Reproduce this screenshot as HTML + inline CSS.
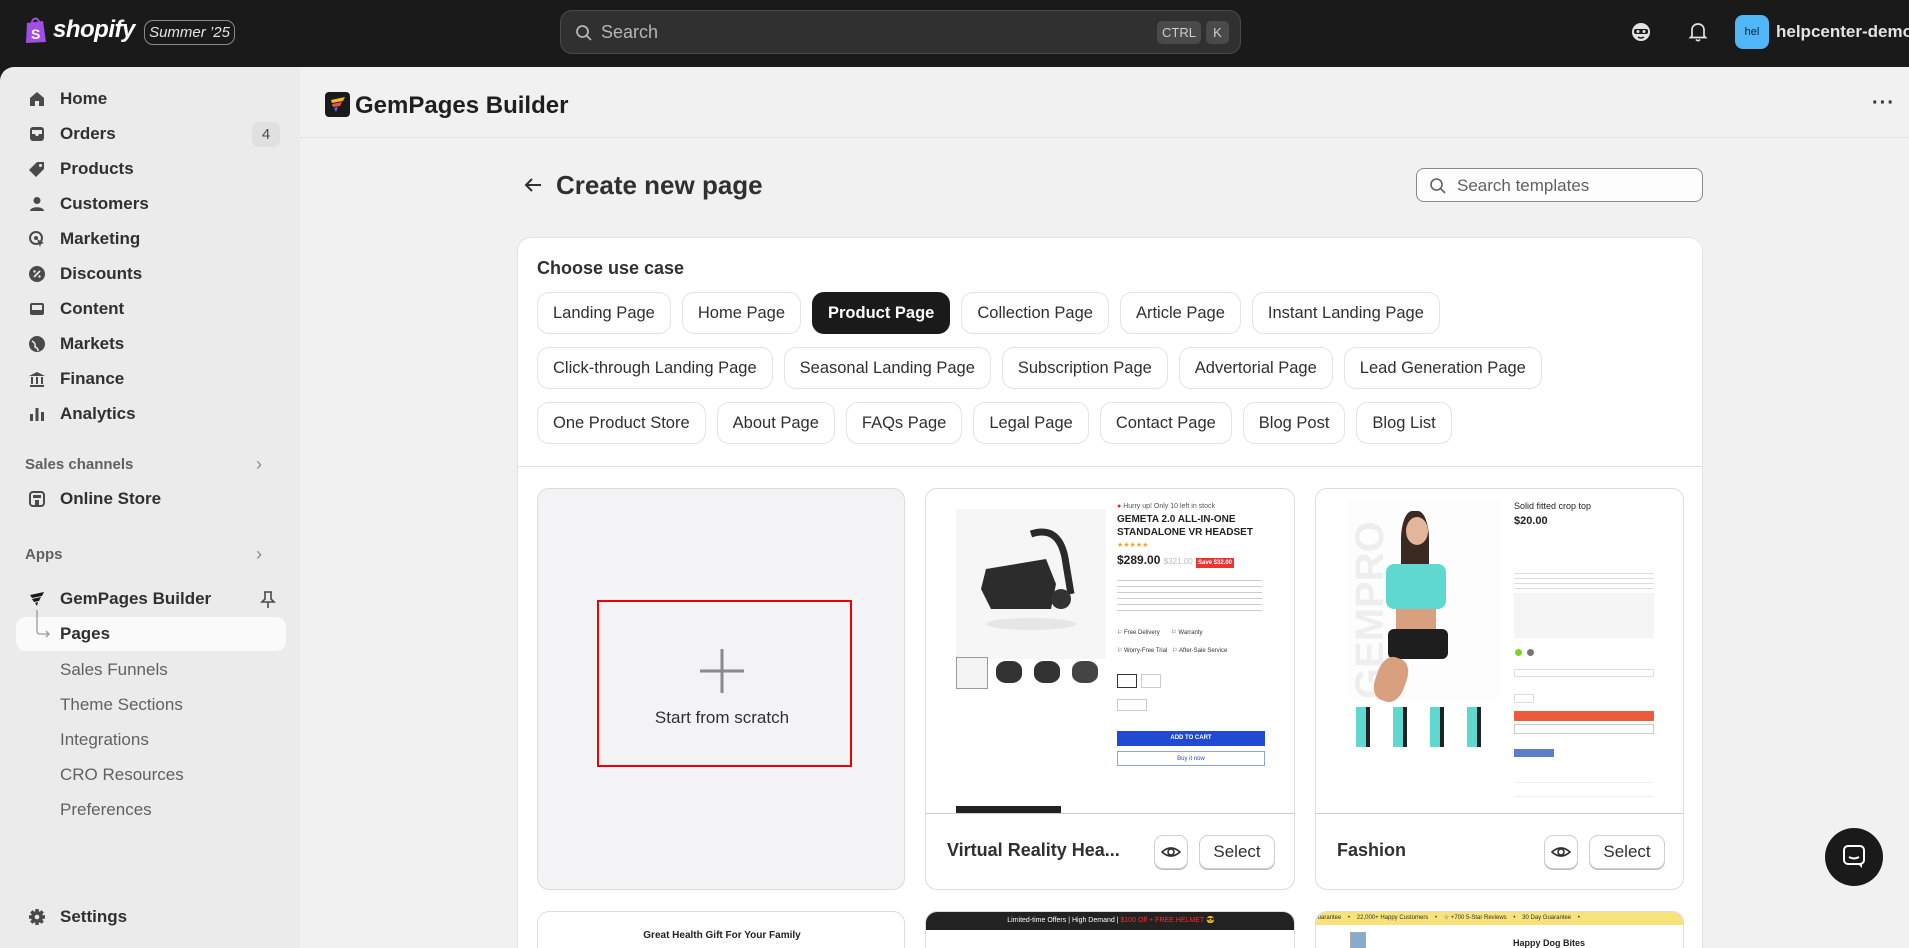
<!DOCTYPE html>
<html style="overflow:hidden;width:1909px;height:948px"><head><meta charset="utf-8">
<style>
*{box-sizing:border-box;margin:0;padding:0}
body{width:1909px;height:948px;overflow:hidden;background:#1a1a1a;font-family:"Liberation Sans",Arial,sans-serif;color:#303030;position:relative}
.a{position:absolute}
.top{left:0;top:0;width:1909px;height:67px;background:#1a1a1a}
.side{left:0;top:67px;width:300px;height:881px;background:#ebebeb;border-top-left-radius:14px;overflow:hidden}
.main{left:300px;top:67px;width:1609px;height:881px;background:#f1f1f1;overflow:hidden}
.nav{position:absolute;left:60px;font-size:17px;font-weight:bold;color:#303030;line-height:20px;white-space:nowrap}
.ico{position:absolute;left:28px;width:18px;height:18px}
.sub{position:absolute;left:60px;font-size:17px;color:#616161;line-height:20px}
.chip{display:inline-block;height:42px;line-height:40px;padding:0 15px;border:1px solid #e3e3e3;border-radius:12px;font-size:16.5px;color:#303030;background:#fff;margin-right:11px;white-space:nowrap}
.row{position:absolute;left:537px;display:flex}
.card{position:absolute;background:#fff;border:1px solid #dcdcdc;border-radius:12px;overflow:hidden}
.btn{position:absolute;height:34px;border:1px solid #cfcfcf;border-radius:9px;background:#fff;box-shadow:0 1px 0 #bbb;font-size:17px;line-height:32px;text-align:center}
</style></head><body>
<div class="a top">
  <svg class="a" style="left:24px;top:16px" width="24" height="28" viewBox="0 0 24 28"><path d="M3 7 L19 5 L22 26 L2 27 Z" fill="#a04ee6"/><path d="M8 7 C8 1 15 1 15 7" stroke="#a04ee6" stroke-width="2" fill="none"/><text x="7" y="23" font-size="14" font-weight="bold" fill="#fff" font-family="Liberation Sans">S</text></svg>
  <div class="a" style="left:53px;top:16px;font-size:24px;font-weight:bold;font-style:italic;color:#fff;letter-spacing:-0.5px">shopify</div>
  <div class="a" style="left:144px;top:20px;width:91px;height:25px;border:1px solid #8a8a8a;border-radius:9px;color:#e3e3e3;font-size:15px;font-style:italic;text-align:center;line-height:23px">Summer ’25</div>
  <div class="a" style="left:560px;top:10px;width:681px;height:44px;background:#303030;border:1px solid #4a4a4a;border-radius:12px">
    <svg class="a" style="left:14px;top:13px" width="18" height="18" viewBox="0 0 18 18"><circle cx="7.5" cy="7.5" r="5.5" stroke="#b5b5b5" stroke-width="1.8" fill="none"/><path d="M11.5 11.5 L16 16" stroke="#b5b5b5" stroke-width="1.8"/></svg>
    <div class="a" style="left:40px;top:11px;font-size:18px;color:#b5b5b5">Search</div>
    <div class="a" style="left:596px;top:10px;width:44px;height:23px;background:#4a4a4a;border-radius:5px;color:#cfcfcf;font-size:13px;text-align:center;line-height:23px">CTRL</div>
    <div class="a" style="left:645px;top:10px;width:23px;height:23px;background:#4a4a4a;border-radius:5px;color:#cfcfcf;font-size:13px;text-align:center;line-height:23px">K</div>
  </div>
  <svg class="a" style="left:1630px;top:21px" width="22" height="22" viewBox="0 0 22 22"><circle cx="11" cy="11" r="9" fill="#e3e3e3"/><rect x="4" y="8" width="14" height="5" rx="2" fill="#1a1a1a"/><circle cx="8" cy="10.5" r="1.5" fill="#e3e3e3"/><circle cx="14" cy="10.5" r="1.5" fill="#e3e3e3"/><path d="M8 16 Q11 18 14 16" stroke="#1a1a1a" stroke-width="1.5" fill="none"/></svg>
  <svg class="a" style="left:1687px;top:21px" width="22" height="22" viewBox="0 0 22 22"><path d="M5 15 L5 9 C5 5 8 3 11 3 C14 3 17 5 17 9 L17 15 L18.5 16.5 L3.5 16.5 Z" stroke="#e3e3e3" stroke-width="1.7" fill="none"/><path d="M9 18.5 Q11 21 13 18.5" stroke="#e3e3e3" stroke-width="1.7" fill="none"/></svg>
  <div class="a" style="left:1735px;top:15px;width:34px;height:34px;background:#4fb7f5;border-radius:8px;font-size:11px;color:#123;text-align:center;line-height:34px">hel</div>
  <div class="a" style="left:1776px;top:22px;font-size:17px;font-weight:bold;color:#e3e3e3;white-space:nowrap">helpcenter-demo</div>
</div>

<div class="a side">
  <div style="position:relative;top:-67px">
  <svg class="ico" style="top:90px" viewBox="0 0 18 18"><path d="M2 8 L9 2 L16 8 L16 16 L11 16 L11 11 L7 11 L7 16 L2 16 Z" fill="#4a4a4a"/></svg><div class="nav" style="top:89px">Home</div>
  <svg class="ico" style="top:125px" viewBox="0 0 18 18"><rect x="2" y="2" width="14" height="14" rx="3" fill="#4a4a4a"/><path d="M4 5 L14 5 L14 9 L11 9 L10 11 L8 11 L7 9 L4 9Z" fill="#ebebeb"/></svg><div class="nav" style="top:124px">Orders</div>
  <div class="a" style="left:252px;top:122px;width:28px;height:25px;background:#e0e0e0;border-radius:7px;font-size:15px;color:#4a4a4a;text-align:center;line-height:25px">4</div>
  <svg class="ico" style="top:160px" viewBox="0 0 18 18"><path d="M9 2 L16 2 L16 9 L8 17 L1 10 Z" fill="#4a4a4a"/><circle cx="12.5" cy="5.5" r="1.5" fill="#ebebeb"/></svg><div class="nav" style="top:159px">Products</div>
  <svg class="ico" style="top:195px" viewBox="0 0 18 18"><circle cx="9" cy="5.5" r="3.5" fill="#4a4a4a"/><path d="M2 16 C2 11 16 11 16 16 Z" fill="#4a4a4a"/></svg><div class="nav" style="top:194px">Customers</div>
  <svg class="ico" style="top:230px" viewBox="0 0 18 18"><circle cx="8" cy="8" r="6" stroke="#4a4a4a" stroke-width="2" fill="none"/><circle cx="8" cy="8" r="2" fill="#4a4a4a"/><path d="M9 9 L16 13 L13 14 L12 17Z" fill="#4a4a4a"/></svg><div class="nav" style="top:229px">Marketing</div>
  <svg class="ico" style="top:265px" viewBox="0 0 18 18"><circle cx="9" cy="9" r="8" fill="#4a4a4a"/><path d="M6 12 L12 6" stroke="#ebebeb" stroke-width="1.8"/><circle cx="6.5" cy="6.5" r="1.2" fill="#ebebeb"/><circle cx="11.5" cy="11.5" r="1.2" fill="#ebebeb"/></svg><div class="nav" style="top:264px">Discounts</div>
  <svg class="ico" style="top:300px" viewBox="0 0 18 18"><rect x="2" y="3" width="14" height="12" rx="2" fill="#4a4a4a"/><rect x="4" y="5" width="10" height="5" fill="#ebebeb"/></svg><div class="nav" style="top:299px">Content</div>
  <svg class="ico" style="top:335px" viewBox="0 0 18 18"><circle cx="9" cy="9" r="8" fill="#4a4a4a"/><path d="M4 6 Q8 8 7 12 Q10 13 10 16" stroke="#ebebeb" stroke-width="1.5" fill="none"/></svg><div class="nav" style="top:334px">Markets</div>
  <svg class="ico" style="top:370px" viewBox="0 0 18 18"><path d="M1 6 L9 2 L17 6Z M2 15 L16 15 L16 17 L2 17Z" fill="#4a4a4a"/><rect x="3" y="7" width="2" height="7" fill="#4a4a4a"/><rect x="8" y="7" width="2" height="7" fill="#4a4a4a"/><rect x="13" y="7" width="2" height="7" fill="#4a4a4a"/></svg><div class="nav" style="top:369px">Finance</div>
  <svg class="ico" style="top:405px" viewBox="0 0 18 18"><rect x="2" y="9" width="3" height="7" fill="#4a4a4a"/><rect x="7.5" y="3" width="3" height="13" fill="#4a4a4a"/><rect x="13" y="7" width="3" height="9" fill="#4a4a4a"/></svg><div class="nav" style="top:404px">Analytics</div>
  <div class="a" style="left:25px;top:456px;font-size:15px;font-weight:bold;color:#616161">Sales channels</div>
  <div class="a" style="left:256px;top:454px;font-size:18px;color:#8a8a8a">›</div>
  <svg class="ico" style="top:490px" viewBox="0 0 18 18"><rect x="2" y="2" width="14" height="14" rx="3" stroke="#4a4a4a" stroke-width="2" fill="none"/><rect x="5" y="5" width="8" height="3" fill="#4a4a4a"/><rect x="7" y="10" width="4" height="5" fill="#4a4a4a"/></svg><div class="nav" style="top:489px">Online Store</div>
  <div class="a" style="left:25px;top:546px;font-size:15px;font-weight:bold;color:#616161">Apps</div>
  <div class="a" style="left:256px;top:544px;font-size:18px;color:#8a8a8a">›</div>
  <svg class="ico" style="top:590px" viewBox="0 0 18 18"><path d="M2 5 L16 2 L14 6 L4 8Z M4 9 L13 7 L11 11 L6 12Z M7 13 L10 12 L9 16Z" fill="#1a1a1a"/></svg><div class="nav" style="top:589px">GemPages Builder</div>
  <svg class="a" style="left:260px;top:590px" width="16" height="20" viewBox="0 0 16 20"><path d="M4 2 L12 2 M5 2 L5 9 L2 12 L14 12 L11 9 L11 2 M8 12 L8 18" stroke="#4a4a4a" stroke-width="1.6" fill="none"/></svg>
  <div class="a" style="left:16px;top:617px;width:270px;height:34px;background:#fafafa;border-radius:10px"></div>
  <svg class="a" style="left:34px;top:610px" width="20" height="30" viewBox="0 0 20 30"><path d="M3 0 L3 21 Q3 24 6 24 L15 24 M12 21 L15 24 L12 27" stroke="#9a9a9a" stroke-width="1.3" fill="none"/></svg>
  <div class="nav" style="top:624px">Pages</div>
  <div class="sub" style="top:660px">Sales Funnels</div>
  <div class="sub" style="top:695px">Theme Sections</div>
  <div class="sub" style="top:730px">Integrations</div>
  <div class="sub" style="top:765px">CRO Resources</div>
  <div class="sub" style="top:800px">Preferences</div>
  <svg class="ico" style="top:908px" viewBox="0 0 18 18"><circle cx="9" cy="9" r="6" fill="#4a4a4a"/><g stroke="#4a4a4a" stroke-width="3.4"><path d="M9 1 L9 17 M1 9 L17 9 M3.3 3.3 L14.7 14.7 M14.7 3.3 L3.3 14.7"/></g><circle cx="9" cy="9" r="2.3" fill="#ebebeb"/></svg><div class="nav" style="top:907px">Settings</div>
  </div>
</div>

<div class="a main">
  <div style="position:relative;left:-300px;top:-67px">
  <div class="a" style="left:300px;top:137px;width:1609px;height:1px;background:#e1e1e1"></div>
  <svg class="a" style="left:325px;top:92px" width="25" height="25" viewBox="0 0 25 25"><rect width="25" height="25" rx="4" fill="#1a1a1a"/><path d="M6 8 L20 5 L18 9 L7 11Z" fill="#f6b72b"/><path d="M7 12 L17 10 L15 14 L8 15Z" fill="#ef4e5e"/><path d="M9 16 L13 15 L11 20Z" fill="#5c6fe8"/></svg>
  <div class="a" style="left:355px;top:92px;font-size:24px;font-weight:bold;color:#1f1f1f">GemPages Builder</div>
  <div class="a" style="left:1872px;top:92px;font-size:20px;font-weight:bold;color:#303030;letter-spacing:1px">···</div>
  <svg class="a" style="left:523px;top:176px" width="20" height="18" viewBox="0 0 20 18"><path d="M18 9 L3 9 M9 3 L3 9 L9 15" stroke="#303030" stroke-width="2" fill="none"/></svg>
  <div class="a" style="left:556px;top:170px;font-size:26px;font-weight:bold;color:#303030">Create new page</div>
  <div class="a" style="left:1416px;top:168px;width:287px;height:34px;background:#fdfdfd;border:1px solid #8a8a8a;border-radius:8px">
    <svg class="a" style="left:12px;top:8px" width="18" height="18" viewBox="0 0 18 18"><circle cx="7.5" cy="7.5" r="5.5" stroke="#616161" stroke-width="1.6" fill="none"/><path d="M11.5 11.5 L16 16" stroke="#616161" stroke-width="1.6"/></svg>
    <div class="a" style="left:40px;top:7px;font-size:17px;color:#616161">Search templates</div>
  </div>
  <div class="a" style="left:517px;top:237px;width:1186px;height:730px;background:#fff;border:1px solid #e3e3e3;border-radius:14px"></div>
  <div class="a" style="left:537px;top:258px;font-size:18px;font-weight:bold;color:#303030">Choose use case</div>
  <div class="row" style="top:292px"><span class="chip">Landing Page</span><span class="chip">Home Page</span><span class="chip" style="background:#1a1a1a;color:#fff;font-weight:bold;border-color:#1a1a1a">Product Page</span><span class="chip">Collection Page</span><span class="chip">Article Page</span><span class="chip">Instant Landing Page</span></div>
  <div class="row" style="top:347px"><span class="chip">Click-through Landing Page</span><span class="chip">Seasonal Landing Page</span><span class="chip">Subscription Page</span><span class="chip">Advertorial Page</span><span class="chip">Lead Generation Page</span></div>
  <div class="row" style="top:402px"><span class="chip">One Product Store</span><span class="chip">About Page</span><span class="chip">FAQs Page</span><span class="chip">Legal Page</span><span class="chip">Contact Page</span><span class="chip">Blog Post</span><span class="chip">Blog List</span></div>
  <div class="a" style="left:518px;top:466px;width:1184px;height:1px;background:#e3e3e3"></div>

  <div class="card" style="left:537px;top:488px;width:368px;height:402px;background:#f3f3f5">
    <div class="a" style="left:59px;top:111px;width:255px;height:167px;border:2px solid #e00;"></div>
    <svg class="a" style="left:160px;top:158px" width="48" height="48" viewBox="0 0 48 48"><path d="M24 2 L24 46 M2 24 L46 24" stroke="#8a8a8a" stroke-width="3"/></svg>
    <div class="a" style="left:0;top:219px;width:368px;text-align:center;font-size:17px;color:#303030">Start from scratch</div>
  </div>

  <div class="card" style="left:925px;top:488px;width:370px;height:402px">
    <div class="a" style="left:30px;top:20px;width:150px;height:150px;background:#f6f6f6"></div>
    <svg class="a" style="left:45px;top:35px" width="120" height="110" viewBox="0 0 120 110"><path d="M60 10 Q90 0 95 40 L100 70" stroke="#2a2a2a" stroke-width="7" fill="none"/><path d="M15 45 L75 35 L85 60 L80 85 L20 85 L10 65Z" fill="#2c2c2c"/><circle cx="90" cy="75" r="10" fill="#333"/><ellipse cx="60" cy="100" rx="45" ry="6" fill="#e6e6e6"/></svg>
    <div class="a" style="left:30px;top:168px;width:32px;height:32px;border:1px solid #999;background:#f3f3f3"></div>
    <div class="a" style="left:70px;top:172px;width:26px;height:22px;background:#333;border-radius:40%"></div>
    <div class="a" style="left:108px;top:172px;width:26px;height:22px;background:#333;border-radius:40%"></div>
    <div class="a" style="left:146px;top:172px;width:26px;height:22px;background:#444;border-radius:40%"></div>
    <div class="a" style="left:191px;top:14px;font-size:7px;color:#e22">● <span style="color:#555">Hurry up! Only 10 left in stock</span></div>
    <div class="a" style="left:191px;top:24px;font-size:10px;font-weight:bold;color:#222;line-height:13px">GEMETA 2.0 ALL-IN-ONE<br>STANDALONE VR HEADSET</div>
    <div class="a" style="left:191px;top:52px;font-size:7px;color:#f5a623">★★★★★</div>
    <div class="a" style="left:191px;top:64px;font-size:12px;font-weight:bold;color:#222">$289.00 <span style="font-size:8px;color:#bbb;font-weight:normal">$321.00</span> <span style="font-size:6px;background:#e33;color:#fff;padding:2px">Save $32.00</span></div>
    <div class="a" style="left:191px;top:88px;width:145px;height:36px;background:repeating-linear-gradient(#fff 0 3px,#ccc 3px 4px,#fff 4px 6px)"></div>
    <div class="a" style="left:191px;top:135px;width:145px;height:40px;font-size:6px;color:#333;line-height:18px">⚐ Free Delivery &nbsp;&nbsp;&nbsp;&nbsp;&nbsp; ⚐ Warranty<br>⚐ Worry-Free Trial &nbsp; ⚐ After-Sale Service</div>
    <div class="a" style="left:191px;top:185px;width:20px;height:14px;border:1px solid #333"></div>
    <div class="a" style="left:215px;top:185px;width:20px;height:14px;border:1px solid #ccc"></div>
    <div class="a" style="left:191px;top:210px;width:30px;height:12px;border:1px solid #ccc"></div>
    <div class="a" style="left:191px;top:242px;width:148px;height:15px;background:#2249d3;color:#fff;font-size:6px;font-weight:bold;text-align:center;line-height:15px">ADD TO CART</div>
    <div class="a" style="left:191px;top:262px;width:148px;height:15px;border:1px solid #8ea0e8;color:#2249d3;font-size:6px;text-align:center;line-height:14px">Buy it now</div>
    <div class="a" style="left:30px;top:317px;width:105px;height:7px;background:#222"></div>
    <div class="a" style="left:0;top:324px;width:370px;height:1px;background:#ccc"></div>
    <div class="a" style="left:21px;top:351px;font-size:18px;font-weight:bold;color:#303030">Virtual Reality Hea...</div>
  </div>
  <div class="btn" style="left:1154px;top:835px;width:34px"><svg width="20" height="20" viewBox="0 0 20 20" style="margin-top:6px"><path d="M1 10 Q10 2 19 10 Q10 18 1 10Z" stroke="#303030" stroke-width="1.6" fill="none"/><circle cx="10" cy="10" r="3" stroke="#303030" stroke-width="1.6" fill="none"/></svg></div>
  <div class="btn" style="left:1199px;top:835px;width:76px">Select</div>

  <div class="card" style="left:1315px;top:488px;width:369px;height:402px">
    <div class="a" style="left:30px;top:12px;width:155px;height:200px;background:#fdfdfd"></div>
    <div class="a" style="left:32px;font-size:40px;font-weight:bold;color:#eee;transform:rotate(-90deg);transform-origin:left top;top:210px">GEMPRO</div>
    <div class="a" style="left:85px;top:22px;width:28px;height:70px;background:#3a2a22;border-radius:40% 40% 20% 20%"></div>
    <div class="a" style="left:90px;top:28px;width:22px;height:28px;background:#e3b69a;border-radius:50%"></div>
    <div class="a" style="left:70px;top:75px;width:60px;height:45px;background:#5fd8d0;border-radius:8px"></div>
    <div class="a" style="left:80px;top:120px;width:40px;height:25px;background:#d9a080"></div>
    <div class="a" style="left:72px;top:140px;width:60px;height:30px;background:#1e1e1e;border-radius:6px"></div>
    <div class="a" style="left:60px;top:168px;width:30px;height:45px;background:#d9a080;border-radius:40%;transform:rotate(20deg)"></div>
    <div class="a" style="left:28px;top:218px;width:150px;height:40px;background:repeating-linear-gradient(90deg,#fff 0 12px,#5fd8d0 12px 22px,#222 22px 26px,#fff 26px 37px)"></div>
    <div class="a" style="left:198px;top:12px;font-size:9px;color:#222">Solid fitted crop top</div>
    <div class="a" style="left:198px;top:26px;font-size:11px;font-weight:bold;color:#222">$20.00</div>
    <div class="a" style="left:198px;top:80px;width:140px;height:20px;background:repeating-linear-gradient(#fff 0 4px,#ddd 4px 5px)"></div>
    <div class="a" style="left:198px;top:104px;width:140px;height:45px;background:#f5f5f5"></div>
    <div class="a" style="left:199px;top:160px;width:7px;height:7px;border-radius:50%;background:#7ed321"></div>
    <div class="a" style="left:211px;top:160px;width:7px;height:7px;border-radius:50%;background:#777"></div>
    <div class="a" style="left:198px;top:180px;width:140px;height:8px;border:1px solid #ddd"></div>
    <div class="a" style="left:198px;top:205px;width:20px;height:9px;border:1px solid #ddd"></div>
    <div class="a" style="left:198px;top:222px;width:140px;height:10px;background:#eb5b3c"></div>
    <div class="a" style="left:198px;top:235px;width:140px;height:10px;border:1px solid #ccc"></div>
    <div class="a" style="left:198px;top:260px;width:40px;height:8px;background:#5c7ec9"></div>
    <div class="a" style="left:198px;top:280px;width:140px;height:40px;background:repeating-linear-gradient(#fff 0 13px,#eee 13px 14px)"></div>
    <div class="a" style="left:0;top:324px;width:369px;height:1px;background:#ccc"></div>
    <div class="a" style="left:21px;top:351px;font-size:18px;font-weight:bold;color:#303030">Fashion</div>
  </div>
  <div class="btn" style="left:1544px;top:835px;width:34px"><svg width="20" height="20" viewBox="0 0 20 20" style="margin-top:6px"><path d="M1 10 Q10 2 19 10 Q10 18 1 10Z" stroke="#303030" stroke-width="1.6" fill="none"/><circle cx="10" cy="10" r="3" stroke="#303030" stroke-width="1.6" fill="none"/></svg></div>
  <div class="btn" style="left:1589px;top:835px;width:76px">Select</div>

  <div class="card" style="left:537px;top:911px;width:368px;height:60px">
    <div class="a" style="left:0;top:18px;width:368px;text-align:center;font-size:10px;font-weight:bold;color:#222">Great Health Gift For Your Family</div>
  </div>
  <div class="card" style="left:925px;top:911px;width:370px;height:60px">
    <div class="a" style="left:0;top:0;width:370px;height:18px;background:#222;color:#fff;font-size:7px;text-align:center;line-height:18px">Limited-time Offers | High Demand | <span style="color:#e33">$100 Off + FREE HELMET</span> 😎</div>
  </div>
  <div class="card" style="left:1315px;top:911px;width:369px;height:60px">
    <div class="a" style="left:0;top:0;width:369px;height:13px;background:#f8e27a;font-size:6px;line-height:13px;color:#333;white-space:nowrap">&nbsp;uarantee &nbsp;&nbsp; • &nbsp;&nbsp; 22,000+ Happy Customers &nbsp;&nbsp; • &nbsp;&nbsp; ☆ +700 5-Star Reviews &nbsp;&nbsp; • &nbsp;&nbsp; 30 Day Guarantee &nbsp;&nbsp; •</div>
    <div class="a" style="left:197px;top:26px;font-size:9px;font-weight:bold;color:#222">Happy Dog Bites</div>
    <div class="a" style="left:34px;top:20px;width:16px;height:20px;border:1px solid #aaa;background:#8ac"></div>
  </div>
  </div>
</div>
<div class="a" style="left:1825px;top:828px;width:58px;height:58px;border-radius:50%;background:#1a1a1a">
  <svg class="a" style="left:17px;top:16px" width="24" height="26" viewBox="0 0 24 26"><rect x="2" y="2" width="20" height="18" rx="4" stroke="#fff" stroke-width="2" fill="none"/><path d="M7 13 Q12 16 17 13" stroke="#fff" stroke-width="2" fill="none"/><path d="M16 20 L20 24 L20 20" fill="#fff"/></svg>
</div>
</body></html>
